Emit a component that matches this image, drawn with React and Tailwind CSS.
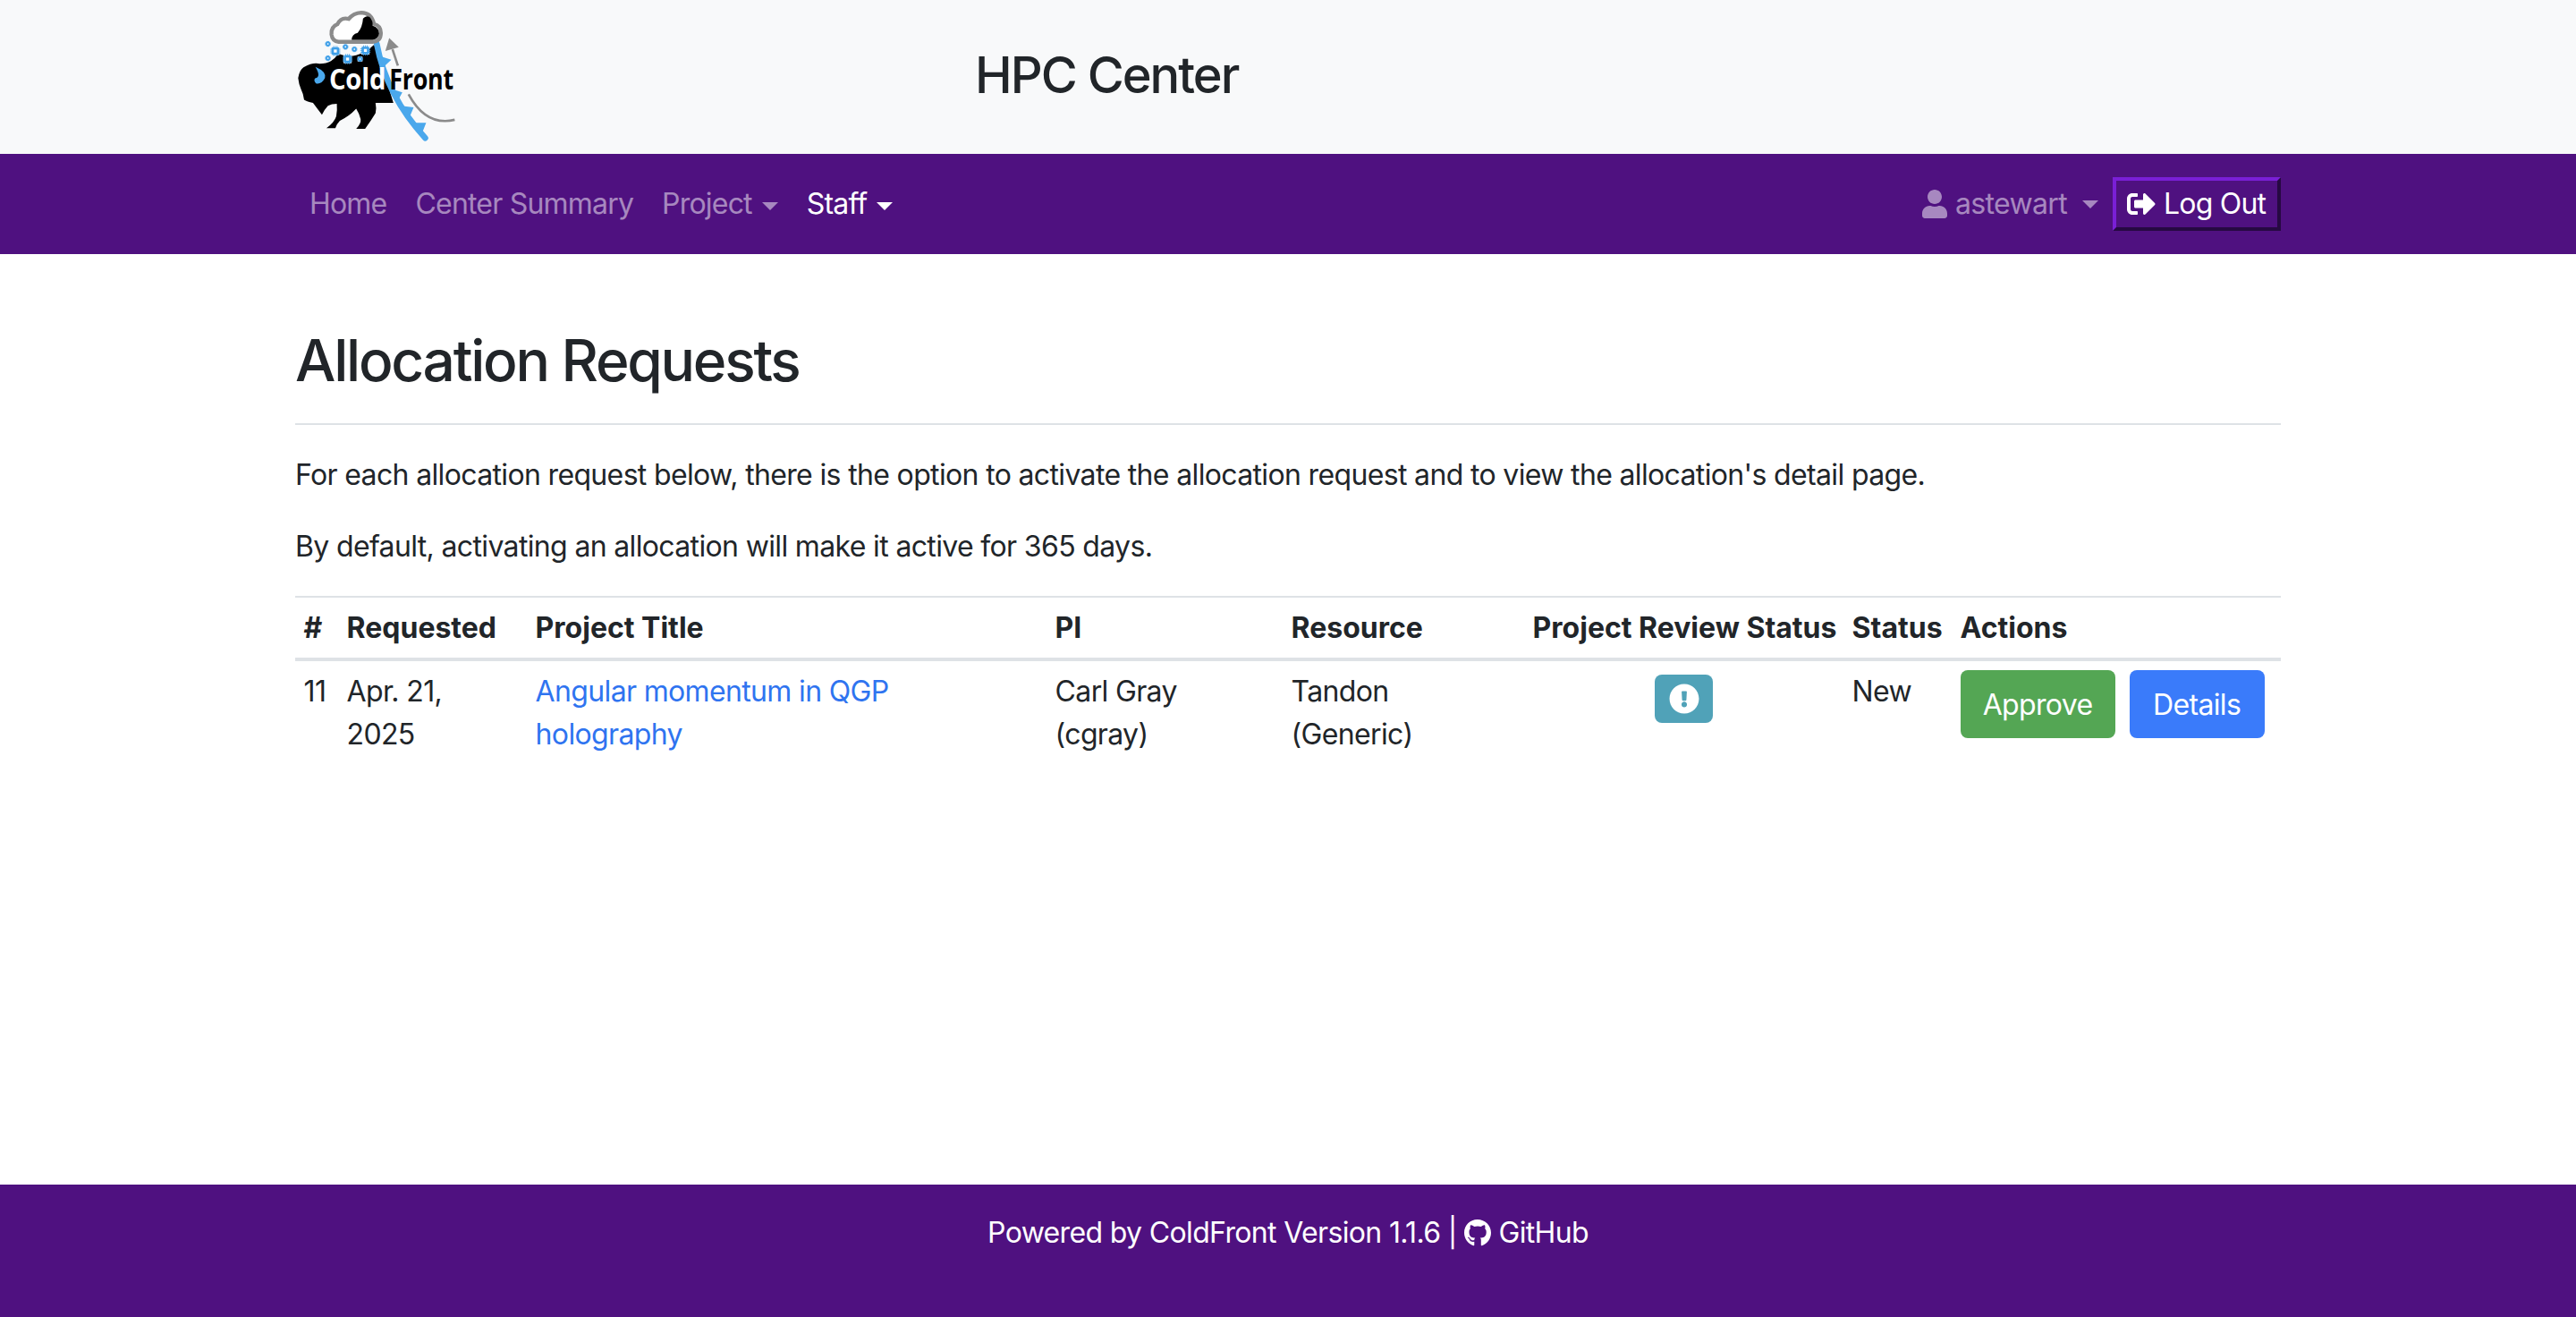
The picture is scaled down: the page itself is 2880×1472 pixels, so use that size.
import React from "react";
import { FaUser, FaSignOutAlt, FaExclamationCircle, FaGithub } from "react-icons/fa";

function Chip({ x, y, s }) {
  const p = [-0.3, 0, 0.3];
  return (
    <g>
      <rect x={x - s / 2 - 4} y={y - s / 2 - 4} width={s + 8} height={s + 8} fill="#cfe8fa" rx="2" />
      <rect x={x - s / 2} y={y - s / 2} width={s} height={s} stroke="#3f9fe8" strokeWidth="5" fill="#3f9fe8" rx="1" />
      <rect x={x - s / 4} y={y - s / 4} width={s / 2} height={s / 2} fill="#fff" />
      <g stroke="#3f9fe8" strokeWidth="2.5">
        {p.map((k) => (
          <path key={k} d={`M${x + k * s} ${y - s / 2}v${-s / 5 - 3}M${x + k * s} ${y + s / 2}v${s / 5 + 3}M${x - s / 2} ${y + k * s}h${-s / 5 - 3}M${x + s / 2} ${y + k * s}h${s / 5 + 3}`} />
        ))}
      </g>
    </g>
  );
}

function Logo({ className }) {
  return (
    <svg viewBox="90 0 580 510" className={className} aria-label="ColdFront">
      <path fill="#000" d="M100 262Q104 236 118 226Q150 208 172 214Q195 214 210 205Q225 195 235 180Q265 192 295 185Q330 175 355 150L375 200L420 345L360 345Q364 365 360 380Q345 405 325 432L295 432Q312 415 310 400Q305 380 295 365Q270 392 240 405Q230 415 225 430L195 430Q222 410 228 390Q232 370 230 348Q212 348 200 355Q188 368 180 385Q165 365 150 345Q130 342 120 335Q118 315 110 300Q102 282 100 262Z" />
      <path fill="none" stroke="#4aa8ec" strokeWidth="20" strokeLinecap="round" d="M364 146Q396 320 527 463" />
      <path fill="#4aa8ec" d="M375 188L413 200L386 226ZM412 298L450 310L435 338ZM445 355L488 360L475 392ZM485 412L530 412L515 450Z" />
      <path fill="none" stroke="#8b8b8b" strokeWidth="8" d="M435 220L417 165" />
      <path fill="#8b8b8b" d="M406 127L393 171L438 158Z" />
      <path fill="none" stroke="#8b8b8b" strokeWidth="8" d="M471 316Q530 425 626 402" />
      <path fill="#fff" stroke="#8b8b8b" strokeWidth="13" d="M236 140H350Q378 138 378 110Q378 86 355 80Q346 42 312 42Q285 44 270 63Q244 56 232 81Q210 90 212 115Q215 138 236 140Z" />
      <path fill="#000" d="M280 133Q280 115 300 110Q316 92 318 62Q328 50 340 57Q352 70 350 86Q372 92 372 112Q370 130 350 133Z" />
      <Chip x={225} y={171} s={20} />
      <Chip x={266} y={198} s={20} />
      <Chip x={326} y={169} s={20} />
      <Chip x={259} y={157} s={9} />
      <Chip x={289} y={165} s={9} />
      <Chip x={308} y={198} s={9} />
      <Chip x={200} y={147} s={9} />
      <Chip x={200} y={195} s={9} />
      <path fill="#4aa8ec" d="M158 224Q196 240 190 262Q178 284 160 280Q150 270 158 262Q178 258 158 224Z" />
      <text x="204" y="300" fill="#fff" fontSize="94" fontWeight="700" fontFamily="'Open Sans',sans-serif" textLength="190" lengthAdjust="spacingAndGlyphs">Cold</text>
      <text x="406" y="300" fill="#000" fontSize="94" fontWeight="700" fontFamily="'Open Sans',sans-serif" textLength="216" lengthAdjust="spacingAndGlyphs">Front</text>
    </svg>
  );
}

function Caret({ className = "" }) {
  return <span className={`inline-block ml-[11px] align-[4px] border-t-[9px] border-x-[9px] border-x-transparent border-b-0 ${className}`} />;
}

export default function App() {
  return (
    <div className="min-h-screen flex flex-col bg-white text-[#212529] text-[32px] leading-[48px] tracking-[-0.65px] [font-family:Inter,sans-serif]">
      <header className="bg-[#f8f9fa] h-[172px]">
        <div className="w-[2280px] mx-auto px-[30px] flex items-start">
          <div className="w-[760px] shrink-0">
            <Logo className="block w-[193px] h-[170px]" />
          </div>
          <h1 className="text-[56px] leading-[67px] font-medium mt-[51px] tracking-[-2px]">HPC Center</h1>
        </div>
      </header>

      <nav className="bg-[#4f1180] h-[112px]">
        <div className="w-[2280px] mx-auto px-[30px] h-full flex items-center justify-between">
          <ul className="flex items-center tracking-[-0.8px]">
            <li className="px-4 text-white/50">Home</li>
            <li className="px-4 text-white/50">Center Summary</li>
            <li className="px-4 text-white/50">Project<Caret className="border-t-white/50" /></li>
            <li className="px-4 text-white">Staff<Caret className="border-t-white" /></li>
          </ul>
          <div className="flex items-center">
            <div className="px-4 text-white/50 flex items-center">
              <FaUser className="w-7 h-8 mr-[9px]" />
              <span>astewart</span>
              <Caret className="ml-[17px]" />
            </div>
            <button className="h-[60px] w-[188px] pl-3 flex items-center text-white tracking-[-0.8px] border-4 border-t-[#7a1fd6] border-l-[#7a1fd6] border-r-[#260942] border-b-[#260942]">
              <FaSignOutAlt className="w-8 h-8 mr-[9px]" />
              Log Out
            </button>
          </div>
        </div>
      </nav>

      <main className="w-[2280px] mx-auto px-[30px] flex-1">
        <h2 className="text-[64px] leading-[77px] font-medium mt-[80px] mb-[32px] tracking-[-2.25px]">Allocation Requests</h2>
        <hr className="border-t-2 border-[#dee2e6] mb-8" />
        <p className="mb-8">For each allocation request below, there is the option to activate the allocation request and to view the allocation's detail page.</p>
        <p className="mb-[31px]">By default, activating an allocation will make it active for 365 days.</p>
        <table className="w-full table-fixed border-collapse text-left">
          <thead>
            <tr className="border-t-2 border-b-4 border-[#dee2e6] font-bold tracking-normal">
              <th className="w-[48px] p-[9.6px]">#</th>
              <th className="w-[211px] p-[9.6px]">Requested</th>
              <th className="w-[581px] p-[9.6px]">Project Title</th>
              <th className="w-[264px] p-[9.6px]">PI</th>
              <th className="w-[270px] p-[9.6px]">Resource</th>
              <th className="w-[357px] p-[9.6px] whitespace-nowrap">Project Review Status</th>
              <th className="w-[121px] p-[9.6px]">Status</th>
              <th className="p-[9.6px]">Actions</th>
            </tr>
          </thead>
          <tbody>
            <tr className="align-top">
              <td className="p-[9.6px]">11</td>
              <td className="p-[9.6px]">Apr. 21,<br />2025</td>
              <td className="p-[9.6px]"><a className="text-[#2f74f0]" href="#">Angular momentum in QGP holography</a></td>
              <td className="p-[9.6px]">Carl Gray<br />(cgray)</td>
              <td className="p-[9.6px]">Tandon<br />(Generic)</td>
              <td className="p-[9.6px]">
                <div className="flex justify-center">
                  <span className="w-[65px] h-[54px] mt-[5px] rounded-lg bg-[#50a2b8] text-white flex items-center justify-center">
                    <FaExclamationCircle className="w-[34px] h-[34px]" />
                  </span>
                </div>
              </td>
              <td className="p-[9.6px]">New</td>
              <td className="p-[9.6px] whitespace-nowrap">
                <div className="flex gap-4">
                  <button className="h-[76px] w-[173px] pt-[2px] rounded-lg bg-[#54a654] text-white">Approve</button>
                  <button className="h-[76px] w-[151px] pt-[2px] rounded-lg bg-[#3a7bfa] text-white">Details</button>
                </div>
              </td>
            </tr>
          </tbody>
        </table>
      </main>

      <footer className="bg-[#4f1180] h-[148px] pt-[30px] text-white text-center">
        <span>Powered by ColdFront Version 1.1.6 | <FaGithub className="inline w-[30px] h-[32px] align-[-5px]" /> GitHub</span>
      </footer>
    </div>
  );
}
